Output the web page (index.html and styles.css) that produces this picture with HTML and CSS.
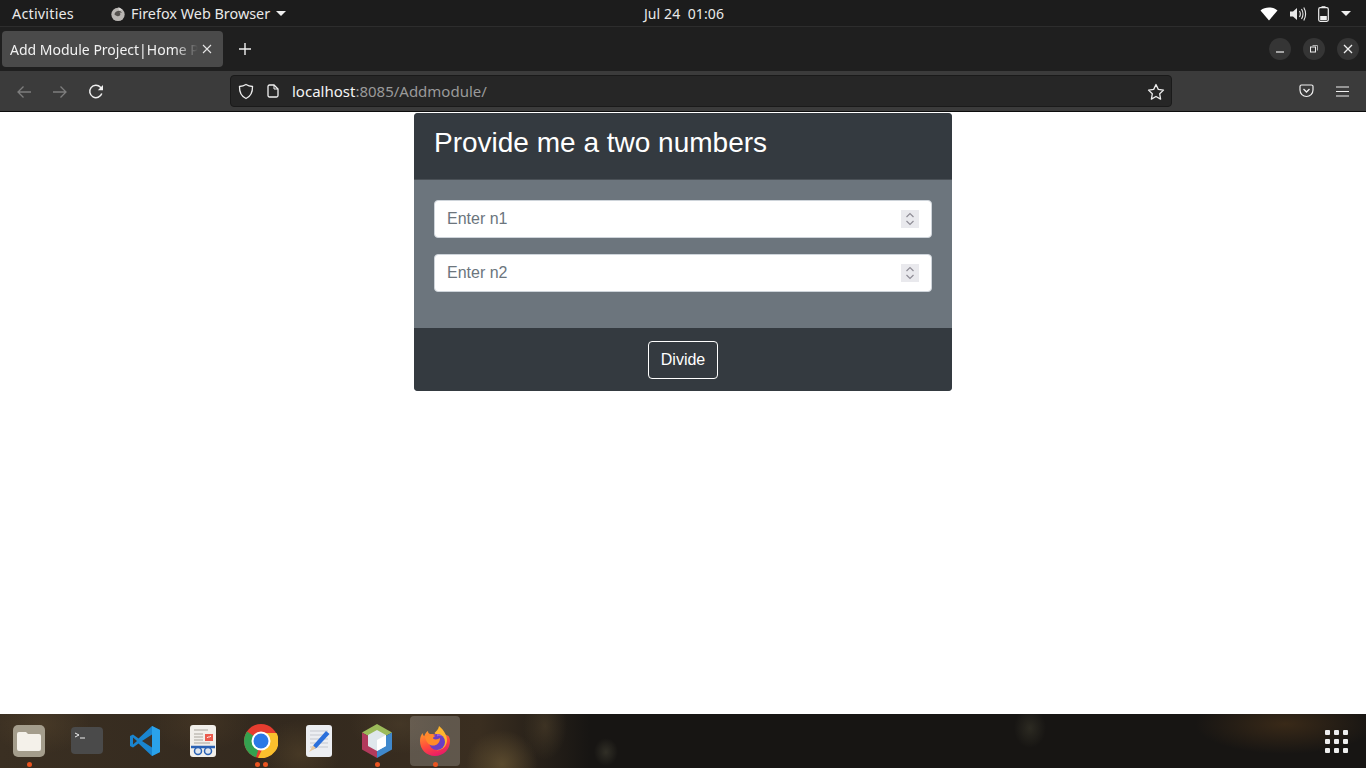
FILE: index.html
```html
<!DOCTYPE html>
<html lang="en">
<head>
    <meta charset="UTF-8">
    <title>Add Module Project|Home Page</title>
    <link rel="stylesheet" href="styles.css">
</head>
<body>
    <!-- GNOME top bar -->
    <div class="topbar">
        <div class="topbar-left">
            <span class="activities">Activities</span>
            <span class="app-menu">
                <svg class="app-icon" width="16" height="16" viewBox="0 0 18 18">
                    <circle cx="9" cy="9.500" r="7.500" fill="#b9b6b3"/>
                    <path d="M5 9.500a4.500 4.500 0 0 1 8.500-1.500c-1-.9-2.400-1-3.300-.6 1.100.3 1.600 1.200 1.400 2.200-.3 1.300-1.700 2.100-3.100 1.800C7 11 6 10.400 5 9.500z" fill="#55524f"/>
                    <path d="M9.500 1c1.800 1 3.500 2 4.500 3.500l-4 .5z" fill="#d8d6d4"/>
                </svg>
                Firefox Web Browser
                <span class="caret"></span>
            </span>
        </div>
        <div class="clock">Jul 24&nbsp; 01:06</div>
        <div class="tray">
            <svg width="18" height="14" viewBox="0 0 18 14"><path d="M0.500 3.500C3 1.300 5.800.5 9 .5s6 .8 8.500 3L9 13.500z" fill="#fff"/></svg>
            <svg width="18" height="16" viewBox="0 0 18 16" fill="none"><path d="M1 5.500h3L8 2v12l-4-3.500H1z" fill="#e8e8e8"/><path d="M10.500 5c1 1.800 1 4.200 0 6M12.500 3c1.800 3 1.800 7 0 10M14.800 1.500c2.200 4 2.200 9 0 13" stroke="#e8e8e8" stroke-width="1.100"/></svg>
            <svg width="11" height="16" viewBox="0 0 11 16" fill="none"><rect x=".7" y="1.700" width="9.600" height="13.600" rx="1.500" stroke="#eee" stroke-width="1.200"/><rect x="3.500" y=".2" width="4" height="1.500" fill="#eee"/><rect x="2.200" y="10" width="6.600" height="4" fill="#eee"/></svg>
            <span class="caret"></span>
        </div>
    </div>

    <!-- Firefox tab strip -->
    <div class="tabstrip">
        <div class="tab">
            <span class="tab-title">Add Module Project|Home Page</span>
            <svg class="tab-close" width="10" height="10" viewBox="0 0 10 10"><path d="M1 1l8 8M9 1l-8 8" stroke="#e6e6e6" stroke-width="1.100"/></svg>
        </div>
        <svg class="new-tab" width="14" height="14" viewBox="0 0 14 14"><path d="M7 1v12M1 7h12" stroke="#f0f0f0" stroke-width="1.400"/></svg>
        <div class="window-btns">
            <span class="win-btn"><svg width="10" height="10" viewBox="0 0 10 10"><path d="M1 8h8" stroke="#eee" stroke-width="1.200"/></svg></span>
            <span class="win-btn"><svg width="10" height="10" viewBox="0 0 10 10" fill="none"><rect x="1.500" y="3" width="5" height="5" stroke="#eee"/><path d="M3.500 1.500h5v5" stroke="#aaa"/></svg></span>
            <span class="win-btn"><svg width="10" height="10" viewBox="0 0 10 10"><path d="M1 1l8 8M9 1l-8 8" stroke="#eee" stroke-width="1.300"/></svg></span>
        </div>
    </div>

    <!-- Firefox navigation bar -->
    <div class="navbar">
        <div class="nav-buttons">
            <svg width="16" height="14" viewBox="0 0 16 14" fill="none"><path d="M15 7H2M7.500 1.500L2 7l5.500 5.500" stroke="#7d7d7d" stroke-width="1.300"/></svg>
            <svg width="16" height="14" viewBox="0 0 16 14" fill="none"><path d="M1 7h13M8.500 1.500L14 7l-5.500 5.500" stroke="#7d7d7d" stroke-width="1.300"/></svg>
            <svg width="16" height="16" viewBox="0 0 16 16" fill="none"><path d="M13.800 9.500A6.200 6.200 0 1 1 12.500 3.200L14.500 5" stroke="#f0f0f0" stroke-width="1.500"/><path d="M15 1v5.200H9.800z" fill="#f0f0f0"/></svg>
        </div>
        <div class="urlbar">
            <svg width="16" height="17" viewBox="0 0 16 17" fill="none"><path d="M8 1.500c2 1.200 4 1.800 6.500 2 .2 5.500-1.800 9.800-6.500 12-4.700-2.200-6.700-6.500-6.500-12 2.500-.2 4.500-.8 6.500-2z" stroke="#ececec" stroke-width="1.300"/></svg>
            <svg class="page-icon" width="12" height="14" viewBox="0 0 12 14" fill="none"><path d="M1 2.500A1.500 1.500 0 0 1 2.500 1H7l4 4v6.500a1.500 1.500 0 0 1-1.500 1.500h-7A1.500 1.500 0 0 1 1 11.500z" stroke="#f0f0f0" stroke-width="1.300"/><path d="M7 1v4h4" stroke="#f0f0f0"/></svg>
            <span class="url"><span class="url-host">localhost</span>:8085/Addmodule/</span>
            <svg class="star" width="18" height="17" viewBox="0 0 18 17" fill="none"><path d="M9 1.500l2.300 4.900 5.200.7-3.800 3.700.9 5.300L9 13.500l-4.600 2.600.9-5.300L1.500 7.100l5.200-.7z" stroke="#ececec" stroke-width="1.300" stroke-linejoin="round"/></svg>
        </div>
        <div class="nav-right">
            <svg width="15" height="14" viewBox="0 0 15 14" fill="none"><path d="M1 2.500A1.500 1.500 0 0 1 2.500 1h10A1.500 1.500 0 0 1 14 2.500V6a6.500 6.500 0 0 1-13 0z" stroke="#f0f0f0" stroke-width="1.200"/><path d="M4.500 5L7.500 8l3-3" stroke="#f0f0f0" stroke-width="1.300"/></svg>
            <svg width="13" height="11" viewBox="0 0 13 11"><path d="M0 1h13M0 5.500h13M0 10h13" stroke="#f0f0f0" stroke-width="1.200"/></svg>
        </div>
    </div>

    <!-- The page itself -->
    <main class="page">
        <form class="card">
            <div class="card-header">
                <h2 class="card-title">Provide me a two numbers</h2>
            </div>
            <div class="card-body">
                <div class="field">
                    <input class="field-input" type="text" placeholder="Enter n1">
                    <span class="spinner">
                        <svg width="10" height="14" viewBox="0 0 10 14" fill="none"><path d="M1.500 5L5 1.500 8.500 5M1.500 9L5 12.500 8.500 9" stroke="#8f8d96" stroke-width="1.200"/></svg>
                    </span>
                </div>
                <div class="field">
                    <input class="field-input" type="text" placeholder="Enter n2">
                    <span class="spinner">
                        <svg width="10" height="14" viewBox="0 0 10 14" fill="none"><path d="M1.500 5L5 1.500 8.500 5M1.500 9L5 12.500 8.500 9" stroke="#8f8d96" stroke-width="1.200"/></svg>
                    </span>
                </div>
            </div>
            <div class="card-footer">
                <button class="btn-divide" type="button">Divide</button>
            </div>
        </form>
    </main>

    <!-- Ubuntu dock -->
    <div class="dock">
        <div class="dock-apps">
            <div class="dock-item">
                <svg width="32" height="32" viewBox="0 0 32 32"><rect width="32" height="32" rx="5" fill="#a49d8c"/><path d="M4 9a2 2 0 0 1 2-2h7l2 2h11a2 2 0 0 1 2 2v13a2 2 0 0 1-2 2H6a2 2 0 0 1-2-2z" fill="#f4f1ea"/></svg>
                <span class="dots"><i></i></span>
            </div>
            <div class="dock-item">
                <svg width="32" height="28" viewBox="0 0 32 28"><rect width="32" height="27" rx="4" fill="#4a4a4a"/><path d="M4 6l4 2-4 2" fill="none" stroke="#eee"/><path d="M9 11h5" stroke="#eee"/></svg>
            </div>
            <div class="dock-item">
                <svg width="32" height="32" viewBox="0 0 32 32"><path d="M23 1L9.500 13.500 4 9.500 1 11v10l3 1.500 5.500-4L23 31l8-4V5z" fill="#1a85cf"/><path d="M23 1l8 4v22l-8 4z" fill="#2aa2ea"/><path d="M23 9.500L13 16l10 6.500z" fill="#3a322a"/><path d="M4 12.500L8 16l-4 3.500z" fill="#3a322a"/></svg>
            </div>
            <div class="dock-item">
                <svg width="26" height="32" viewBox="0 0 26 32"><rect width="26" height="32" rx="3" fill="#f1efea"/><path d="M4 5h14M4 9h9M4 12h9M4 15h9M4 18h16" stroke="#a9a59c"/><rect x="15" y="9" width="8" height="7" fill="#ea5a4c"/><path d="M17 13c1-2 2 0 4-2" stroke="#fff" fill="none"/><path d="M1 22h24" stroke="#2a62b4" stroke-width="2.500"/><circle cx="8" cy="26" r="3.500" fill="#dfe6ee" stroke="#2a62b4" stroke-width="1.500"/><circle cx="18" cy="26" r="3.500" fill="#dfe6ee" stroke="#2a62b4" stroke-width="1.500"/></svg>
            </div>
            <div class="dock-item">
                <svg width="34" height="34" viewBox="0 0 34 34">
                    <circle cx="17" cy="17" r="17" fill="#e53d2f"/>
                    <path d="M3 7.500L17 17l-5 16.300A17 17 0 0 1 3 7.500z" fill="#34a14f"/>
                    <path d="M17 9h15.500A17 17 0 0 1 14 33.800l6-12z" fill="#fbc02d"/>
                    <circle cx="17" cy="17" r="9.500" fill="#fff"/>
                    <circle cx="17" cy="17" r="7.500" fill="#2a79e6"/>
                </svg>
                <span class="dots"><i></i><i></i></span>
            </div>
            <div class="dock-item">
                <svg width="26" height="32" viewBox="0 0 26 32"><rect width="26" height="32" rx="3" fill="#eceef2"/><path d="M4 6h18M4 10h18M4 14h18M4 18h18M4 22h18" stroke="#c5c8cf"/><path d="M20 6l3.500 3-13 14-4 1.500 1-4.500z" fill="#2a6fdb"/><path d="M3 27l4-6.500 3 2.500z" fill="#e8c9a0"/></svg>
            </div>
            <div class="dock-item">
                <svg width="32" height="34" viewBox="0 0 32 34">
                    <path d="M16 0l15 8.500-15 8.500L1 8.500z" fill="#9cbb5a"/>
                    <path d="M1 8.500L16 17v17L1 25.500z" fill="#b23a5c"/>
                    <path d="M31 8.500L16 17v17l15-8.500z" fill="#3f88cc"/>
                    <path d="M16 6l9 5v11l-9 5-9-5V11z" fill="#dfe7ec"/>
                    <path d="M16 16l9-5v11l-9 5z" fill="#fff"/>
                </svg>
                <span class="dots"><i></i></span>
            </div>
            <div class="dock-item dock-item-active">
                <svg width="32" height="32" viewBox="0 0 32 32">
                    <defs>
                        <linearGradient id="fx" x1="0.2" y1="0" x2="0.6" y2="1">
                            <stop offset="0" stop-color="#ff9a2a"/>
                            <stop offset=".55" stop-color="#ff4a3d"/>
                            <stop offset="1" stop-color="#e8186a"/>
                        </linearGradient>
                    </defs>
                    <path d="M16 31C7.500 31 1 24.500 1 16c0-3 .8-5.500 2.500-8 .3 1.500.8 2.500 1.700 3.200C6.500 8 8 6.500 9 6c0 1.500.5 2.500 2 3h14l4.500 2c1.300 2 1.500 3.500 1.500 5 0 8.500-6.500 15-15 15z" fill="url(#fx)"/>
                    <path d="M20 1c-.5 3.500-2.500 5-4.500 7l8 8c1 3-1 8-7 9 7 1 11-4 11.500-9 .3-4-2.500-11-8-15z" fill="#ffb52e"/>
                    <circle cx="18" cy="17" r="8" fill="#6a3ec4"/>
                    <path d="M18 9c2 0 4 1 5.500 2.500-2-1-4-1-5.500 0z" fill="#9a5be0"/>
                    <path d="M6 12c3-2.500 7-3 10.500-1-1.500.5-2.500 1.500-2.500 2.500 2 1.500 5 1 7-.5 0 5-3.500 8-8 7.500-3-.5-6-3.500-7-8.500z" fill="#ff8a2a"/>
                </svg>
                <span class="dots"><i></i></span>
            </div>
        </div>
        <div class="app-grid">
            <i></i><i></i><i></i><i></i><i></i><i></i><i></i><i></i><i></i>
        </div>
    </div>
</body>
</html>
```

FILE: styles.css
```css
/* Global */
* {
    box-sizing: border-box;
}

html, body {
    height: 100%;
}

body {
    margin: 0;
    display: flex;
    flex-direction: column;
    height: 768px;
    overflow: hidden;
    font-family: "Noto Sans", sans-serif;
    background-color: white;
}

/* Top bar */
.topbar {
    height: 27px;
    flex: none;
    display: grid;
    grid-template-columns: 1fr auto 1fr;
    align-items: center;
    padding-top: 1px;
    background-color: #1c1c1c;
    border-bottom: 1px solid #2d2d2d;
    color: #e9e9e9;
    font-size: 14.4px;
}

.topbar-left {
    display: flex;
    align-items: center;
    padding-left: 12px;
}

.activities {
    width: 98px;
    letter-spacing: 0.2px;
}

.app-menu {
    display: flex;
    align-items: center;
    gap: 5px;
}

.caret {
    display: inline-block;
    width: 0;
    height: 0;
    margin-left: 1px;
    border-left: 5px solid transparent;
    border-right: 5px solid transparent;
    border-top: 5px solid #eee;
}

.clock {
    font-size: 14px;
    letter-spacing: 0.1px;
    margin-left: 2px;
}

.tray {
    display: flex;
    align-items: center;
    justify-content: flex-end;
    gap: 11px;
    padding-right: 15px;
}

/* Tab strip */
.tabstrip {
    height: 44px;
    flex: none;
    display: flex;
    align-items: center;
    padding-left: 2px;
    background-color: #1f1f1f;
}

.tab {
    width: 221px;
    height: 36px;
    display: flex;
    align-items: center;
    position: relative;
    padding-left: 8px;
    border-radius: 4px;
    background-color: #4a4a4a;
    color: #f2f2f2;
    font-size: 14px;
}

.tab-title {
    width: 188px;
    overflow: hidden;
    white-space: nowrap;
    -webkit-mask-image: linear-gradient(to right, black 165px, transparent 188px);
    mask-image: linear-gradient(to right, black 165px, transparent 188px);
}

.tab-close {
    margin-left: 4px;
}

.new-tab {
    margin-left: 15px;
}

.window-btns {
    margin-left: auto;
    display: flex;
    gap: 12px;
    padding-right: 7px;
}

.win-btn {
    width: 22px;
    height: 22px;
    display: flex;
    align-items: center;
    justify-content: center;
    border-radius: 50%;
    background-color: #353535;
}

/* Navigation bar */
.navbar {
    height: 41px;
    flex: none;
    display: flex;
    align-items: center;
    background-color: #3b3b3b;
    border-bottom: 1px solid #0c0c0c;
}

.nav-buttons {
    width: 230px;
    display: flex;
    align-items: center;
    gap: 20px;
    padding: 1px 0 0 16px;
}

.urlbar {
    width: 942px;
    height: 32px;
    display: flex;
    align-items: center;
    padding: 0 6px 0 7px;
    border: 1px solid #1a1a1a;
    border-radius: 4px;
    background-color: #262626;
}

.page-icon {
    margin-left: 13px;
}

.url {
    margin-left: 13px;
    color: #9a9a9a;
    font-size: 15px;
}

.url-host {
    color: #f4f4f4;
}

.star {
    margin-left: auto;
}

.nav-right {
    flex: 1;
    display: flex;
    align-items: center;
    justify-content: flex-end;
    gap: 22px;
    padding-right: 17px;
}

/* Page */
.page {
    flex: 1;
    display: flex;
    justify-content: center;
    padding-top: 1px;
    background-color: white;
}

.card {
    width: 538px;
    height: 278px;
    display: flex;
    flex-direction: column;
    border-radius: 4px;
    overflow: hidden;
    font-family: "Liberation Sans", Arial, sans-serif;
    background-color: #6c757d;
}

.card-header {
    height: 67px;
    flex: none;
    display: flex;
    align-items: center;
    padding: 0 20px 6px;
    background-color: #343a40;
    border-bottom: 1px solid #4a5056;
}

.card-title {
    margin: 0;
    color: white;
    font-size: 28px;
    font-weight: 400;
}

.card-body {
    flex: 1;
    display: flex;
    flex-direction: column;
    gap: 16px;
    padding: 20px;
}

.field {
    position: relative;
    height: 38px;
}

.field-input {
    width: 100%;
    height: 100%;
    padding: 0 12px;
    border: 1px solid #ced4da;
    border-radius: 4px;
    background-color: white;
    font-family: inherit;
    font-size: 16px;
}

.field-input::placeholder {
    color: #6c757d;
    opacity: 1;
}

.spinner {
    position: absolute;
    top: 10px;
    right: 13px;
    width: 18px;
    height: 18px;
    display: flex;
    align-items: center;
    justify-content: center;
    background-color: #e9e9ed;
}

.card-footer {
    height: 63px;
    flex: none;
    display: flex;
    align-items: center;
    justify-content: center;
    background-color: #343a40;
}

.btn-divide {
    width: 70px;
    height: 38px;
    padding: 0;
    border: 1px solid white;
    border-radius: 4px;
    background-color: transparent;
    color: white;
    font-family: inherit;
    font-size: 16px;
}

/* Dock: blurred wallpaper behind it */
.dock {
    height: 54px;
    flex: none;
    display: flex;
    align-items: center;
    justify-content: space-between;
    background-color: #171513;
    background-image:
        radial-gradient(ellipse 12px 14px at 606px 38px, rgba(80, 78, 62, 0.45), transparent),
        radial-gradient(ellipse 16px 20px at 1030px 14px, rgba(70, 68, 52, 0.45), transparent),
        radial-gradient(ellipse 90px 30px at 1285px 10px, rgba(85, 58, 28, 0.55), transparent),
        radial-gradient(ellipse 36px 34px at 502px 50px, rgba(100, 82, 50, 0.8), transparent),
        radial-gradient(ellipse 22px 34px at 545px 12px, rgba(80, 66, 44, 0.55), transparent),
        radial-gradient(ellipse 40px 34px at 300px 40px, rgba(90, 72, 44, 0.5), transparent),
        radial-gradient(ellipse 50px 30px at 400px 10px, rgba(80, 66, 46, 0.5), transparent),
        radial-gradient(ellipse 50px 30px at 40px 10px, rgba(85, 68, 44, 0.5), transparent),
        radial-gradient(ellipse 50px 30px at 200px 8px, rgba(80, 62, 40, 0.45), transparent),
        linear-gradient(to right, #3a2f22 0, #33291e 300px, #3a2e20 480px, #171513 590px);
}

.dock-apps {
    display: flex;
    align-items: center;
    padding-left: 4px;
}

.dock-item {
    position: relative;
    width: 50px;
    height: 50px;
    margin-right: 8px;
    display: flex;
    align-items: center;
    justify-content: center;
    border-radius: 4px;
}

.dock-item-active {
    background-color: rgba(255, 255, 255, 0.2);
}

.dots {
    position: absolute;
    left: 0;
    right: 0;
    bottom: -1px;
    display: flex;
    justify-content: center;
    gap: 3px;
}

.dots i {
    width: 5px;
    height: 5px;
    border-radius: 50%;
    background-color: #e95420;
}

.app-grid {
    display: grid;
    grid-template-columns: repeat(3, 5px);
    gap: 4px;
    margin-right: 18px;
}

.app-grid i {
    height: 5px;
    border-radius: 1px;
    background-color: #eee;
}
```
